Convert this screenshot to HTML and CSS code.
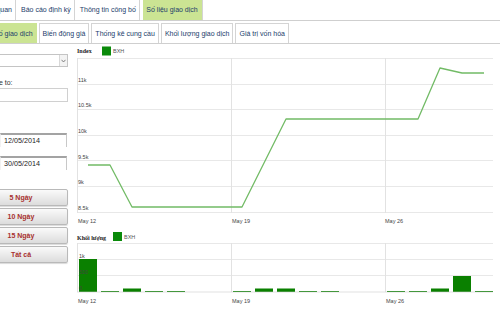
FILE: index.html
```html
<!DOCTYPE html>
<html lang="vi">
<head>
  <meta charset="UTF-8" />
  <title>Số liệu giao dịch</title>
  <link rel="stylesheet" href="styles.css">
</head>
<body>

<ul class="tabs main-tabs">
  <li>Tổng quan</li>
  <li>Báo cáo định kỳ</li>
  <li>Thông tin công bố</li>
  <li class="active">Số liệu giao dịch</li>
</ul>

<ul class="tabs sub-tabs">
  <li class="active">Số giao dịch</li>
  <li>Biến động giá</li>
  <li>Thống kê cung cầu</li>
  <li>Khối lượng giao dịch</li>
  <li>Giá trị vốn hóa</li>
</ul>

<div class="content">
  <div class="side">
    <div class="select">
      <span class="arrow">
        <svg width="5" height="4" viewBox="0 0 5 4"><path d="M0.5 0.8 L2.5 3 L4.5 0.8" fill="none" stroke="#666" stroke-width="0.8"/></svg>
      </span>
    </div>
    <p class="label">Compare to:</p>
    <div class="field"></div>
    <div class="date">12/05/2014</div>
    <div class="date date-to">30/05/2014</div>
    <div class="range">
      <button class="btn">5 Ngày</button>
      <button class="btn">10 Ngày</button>
      <button class="btn">15 Ngày</button>
      <button class="btn">Tất cả</button>
    </div>
  </div>

  <svg class="chart" width="432" height="268" viewBox="68 44 432 268">
    <!-- index chart -->
    <text class="title" x="77" y="52.5">Index</text>
    <rect x="102" y="46.5" width="9" height="9" fill="#0a8a0a"/>
    <text class="legend" x="113" y="53">BXH</text>

    <g stroke="#e8e8e8" stroke-width="1">
      <line x1="77" y1="58.5" x2="493" y2="58.5"/>
      <line x1="77" y1="84.5" x2="493" y2="84.5"/>
      <line x1="77" y1="109.5" x2="493" y2="109.5"/>
      <line x1="77" y1="135.5" x2="493" y2="135.5"/>
      <line x1="77" y1="160.5" x2="493" y2="160.5"/>
      <line x1="77" y1="186.5" x2="493" y2="186.5"/>
      <line x1="77" y1="212.5" x2="493" y2="212.5"/>
    </g>
    <g stroke="#e2e2e2" stroke-width="1">
      <line x1="77.5" y1="58" x2="77.5" y2="213"/>
      <line x1="231.5" y1="58" x2="231.5" y2="213"/>
      <line x1="385.5" y1="58" x2="385.5" y2="213"/>
    </g>
    <g class="axis">
      <text x="78" y="82">11k</text>
      <text x="78" y="107">10.5k</text>
      <text x="78" y="133">10k</text>
      <text x="78" y="158.5">9.5k</text>
      <text x="78" y="184">9k</text>
      <text x="78" y="210">8.5k</text>
      <text x="78" y="223">May 12</text>
      <text x="232" y="223">May 19</text>
      <text x="385" y="223">May 26</text>
    </g>
    <polyline fill="none" stroke="#72bb66" stroke-width="1.3" stroke-linejoin="round"
      points="88,165 110,165 132,207 154,207 176,207 198,207 220,207 242,207 264,163 286,119 308,119 330,119 352,119 374,119 396,119 418,119 440,68 462,73 484,73"/>

    <!-- volume chart -->
    <text class="title" x="77" y="239.5">Khối lượng</text>
    <rect x="113" y="232" width="9" height="9" fill="#0a8a0a"/>
    <text class="legend" x="124" y="239">BXH</text>

    <g stroke="#e8e8e8" stroke-width="1">
      <line x1="77" y1="243.5" x2="493" y2="243.5"/>
      <line x1="77" y1="259.5" x2="493" y2="259.5"/>
      <line x1="77" y1="275.5" x2="493" y2="275.5"/>
    </g>
    <g stroke="#e2e2e2" stroke-width="1">
      <line x1="77.5" y1="243" x2="77.5" y2="292"/>
      <line x1="231.5" y1="243" x2="231.5" y2="292"/>
      <line x1="385.5" y1="243" x2="385.5" y2="292"/>
    </g>
    <g fill="#0a8000">
      <rect x="79" y="259" width="18" height="33"/>
      <rect x="101" y="291" width="18" height="1"/>
      <rect x="123" y="288.5" width="18" height="3.5"/>
      <rect x="145" y="291" width="18" height="1"/>
      <rect x="167" y="291" width="18" height="1"/>
      <rect x="233" y="291" width="18" height="1"/>
      <rect x="255" y="288.5" width="18" height="3.5"/>
      <rect x="277" y="288.5" width="18" height="3.5"/>
      <rect x="299" y="291" width="18" height="1"/>
      <rect x="321" y="291" width="18" height="1"/>
      <rect x="387" y="291" width="18" height="1"/>
      <rect x="409" y="291" width="18" height="1"/>
      <rect x="431" y="288.5" width="18" height="3.5"/>
      <rect x="453" y="276" width="18" height="16"/>
      <rect x="475" y="291" width="18" height="1"/>
    </g>
    <line x1="77" y1="292" x2="493" y2="292" stroke="#cfcfcf" stroke-width="0.6"/>
    <g class="axis">
      <text x="79" y="257.5">1k</text>
      <text x="79" y="274">500</text>
      <text x="79" y="290">0</text>
      <text x="78" y="303">May 12</text>
      <text x="232" y="303">May 19</text>
      <text x="386" y="303">May 26</text>
    </g>
  </svg>
</div>

</body>
</html>
```

FILE: styles.css
```css
* {
  margin: 0; padding: 0; box-sizing: border-box;
}

body {
  width: 500px;
  height: 312px;
  overflow: hidden;
  background: #fff;
  color: #1b3c6b;
  font-family: "Liberation Sans", Arial, sans-serif;
  font-size: 7px;
}

.tabs {
  display: flex;
  list-style: none;
  white-space: nowrap;
  border-bottom: 1px solid #cfcfcf;
}

.main-tabs {
  margin-left: -25px;
}

.main-tabs li {
  line-height: 20px;
  padding: 0 3.5px;
  margin-right: 1px;
  border-right: 1px solid #d4d4d4;
}

.main-tabs li.active {
  margin-left: 2px;
  padding: 0 4px 0 3px;
  background: #cbe493;
}

.sub-tabs {
  margin-top: 2px;
  margin-left: -10px;
}

.sub-tabs li {
  line-height: 19px;
  padding: 0 3px;
  margin-right: 2px;
  border: 1px solid #d4d4d4;
  border-bottom: none;
}

.sub-tabs li.active {
  background: #cbe493;
  border-color: #cbe493;
}

.content {
  display: flex;
}

.side {
  flex: none;
  width: 94px;
  margin-left: -26px;
  color: #333;
}

.select {
  position: relative;
  height: 13px;
  margin-top: 10px;
  border: 1px solid #c4c4c4;
  background: #fff;
}

.select .arrow {
  position: absolute;
  right: 0;
  top: 0;
  width: 8px;
  height: 11px;
  border-left: 1px solid #d8d8d8;
  background: #f3f3f3;
  display: flex;
  align-items: center;
  justify-content: center;
}

.label {
  margin-top: 12px;
  line-height: 8px;
}

.field {
  height: 14px;
  margin-top: 1px;
  border: 1px solid #d0d0d0;
}

.date {
  width: 67px;
  height: 14px;
  margin-top: 31px;
  margin-left: 26px;
  padding-left: 3px;
  line-height: 12px;
  color: #222;
  font-size: 7.2px;
  border-top: 2px solid #a3a3a3;
  border-right: 1px solid #c8c8c8;
  border-left: 1px solid #f2f2f2;
}

.date-to {
  margin-top: 9px;
}

.range {
  margin-top: 19px;
}

.btn {
  display: block;
  width: 100%;
  height: 17px;
  margin-bottom: 2px;
  border: 1px solid #b9b9b9;
  border-radius: 2px;
  background: linear-gradient(#fafafa, #dcdcdc);
  box-shadow: 0 1px 1px rgba(0, 0, 0, 0.15);
  color: #a8302e;
  font-family: "Liberation Sans", Arial, sans-serif;
  font-size: 7px;
  font-weight: bold;
}

.chart {
  flex: none;
  display: block;
}

.chart text {
  font-family: "Liberation Sans", Arial, sans-serif;
  fill: #444;
}

.chart .title {
  font-family: "Liberation Serif", serif;
  font-size: 6px;
  font-weight: bold;
  fill: #222;
}

.chart .legend {
  font-size: 5.5px;
  fill: #555;
}

.chart .axis text {
  font-size: 5.5px;
}
```
